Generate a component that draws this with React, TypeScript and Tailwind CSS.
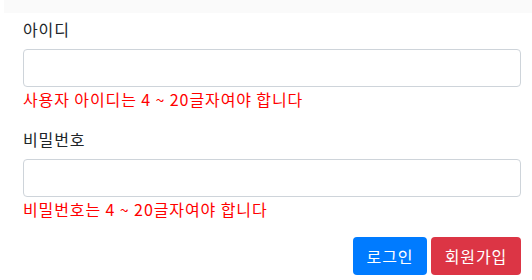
import { useState } from "react";

export default function App() {
  const [username, setUsername] = useState("");
  const [password, setPassword] = useState("");

  return (
    <div className="w-[532px] h-[280px] bg-white font-['Noto_Sans_CJK_KR','Noto_Sans',sans-serif] text-[16px] text-[#212529] leading-[24px] tracking-[0.9px]">
      <div className="ml-1 h-[13px] bg-[#fafafa]" />
      <form className="pt-1 pl-[23px] pr-[11px]" onSubmit={(e) => e.preventDefault()}>
        <div className="mb-4">
          <label className="block mb-2">아이디</label>
          <input
            value={username}
            onChange={(e) => setUsername(e.target.value)}
            className="block w-full h-[38px] px-3 border border-[#ced4da] rounded-[4px] outline-none"
          />
          <div className="text-[#ff0000]">사용자 아이디는 4 ~ 20글자여야 합니다</div>
        </div>
        <div className="mb-4">
          <label className="block mb-2">비밀번호</label>
          <input
            type="password"
            value={password}
            onChange={(e) => setPassword(e.target.value)}
            className="block w-full h-[38px] px-3 border border-[#ced4da] rounded-[4px] outline-none"
          />
          <div className="text-[#ff0000]">비밀번호는 4 ~ 20글자여야 합니다</div>
        </div>
        <div className="flex justify-end gap-1">
          <button type="submit" className="w-[74px] h-[38px] rounded-[4px] bg-[#007bff] text-white">
            로그인
          </button>
          <button type="button" className="w-[90px] h-[38px] rounded-[4px] bg-[#dc3545] text-white">
            회원가입
          </button>
        </div>
      </form>
    </div>
  );
}
